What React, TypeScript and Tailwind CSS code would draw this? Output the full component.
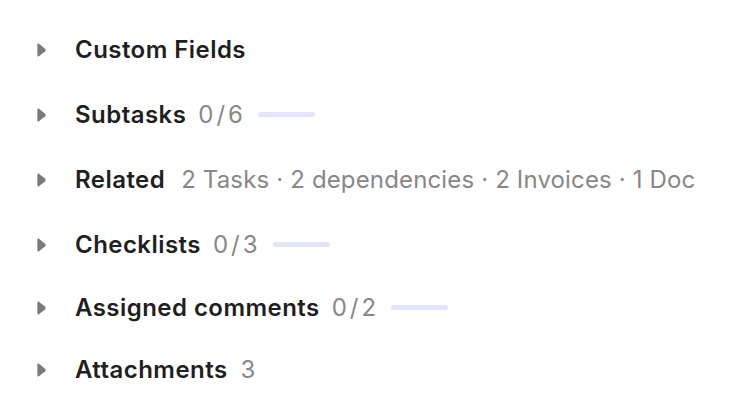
import React from "react";

const Tri = () => (
  <svg width="9" height="14" viewBox="0 0 9 14" className="shrink-0">
    <path d="M1.6 0.6 L8.2 5.8 Q9 7 8.2 8.2 L1.6 13.4 Q0.4 14.1 0.4 12.6 L0.4 1.4 Q0.4 -0.1 1.6 0.6 Z" fill="#7a7a7a" />
  </svg>
);

type Row = { title: string; meta?: string; frac?: [string, string]; gap?: string; h: string };

const rows: Row[] = [
  { title: "Custom Fields", h: "h-[64px]" },
  { title: "Subtasks", frac: ["0", "6"], h: "h-[65px]" },
  { title: "Related", meta: "2 Tasks · 2 dependencies · 2 Invoices · 1 Doc", gap: "ml-[16px]", h: "h-[65px]" },
  { title: "Checklists", frac: ["0", "3"], h: "h-[65px]" },
  { title: "Assigned comments", frac: ["0", "2"], h: "h-[61px]" },
  { title: "Attachments", meta: "3", h: "h-[64px]" },
];

export default function App() {
  return (
    <div
      className="w-[756px] h-[418px] bg-white pt-[18px] pl-[37px]"
      style={{ fontFamily: "Inter, 'Noto Sans', sans-serif" }}
    >
      {rows.map((r) => (
        <div key={r.title} className={`flex items-center ${r.h}`}>
          <Tri />
          <span className="ml-[29px] text-[24px] font-semibold text-[#1f1f1f] tracking-[0.45px]">
            {r.title}
          </span>
          {r.meta && (
            <span className={`${r.gap ?? "ml-[13px]"} text-[24px] text-[#878787] tracking-[0.15px]`}>
              {r.meta}
            </span>
          )}
          {r.frac && (
            <>
              <span className="ml-[12px] text-[24px] text-[#878787]">
                {r.frac[0]}
                <span className="mx-[3px]">/</span>
                {r.frac[1]}
              </span>
              <div className="ml-[15px] h-[5px] w-[57px] rounded-full bg-[#e3e3fb]" />
            </>
          )}
        </div>
      ))}
    </div>
  );
}
